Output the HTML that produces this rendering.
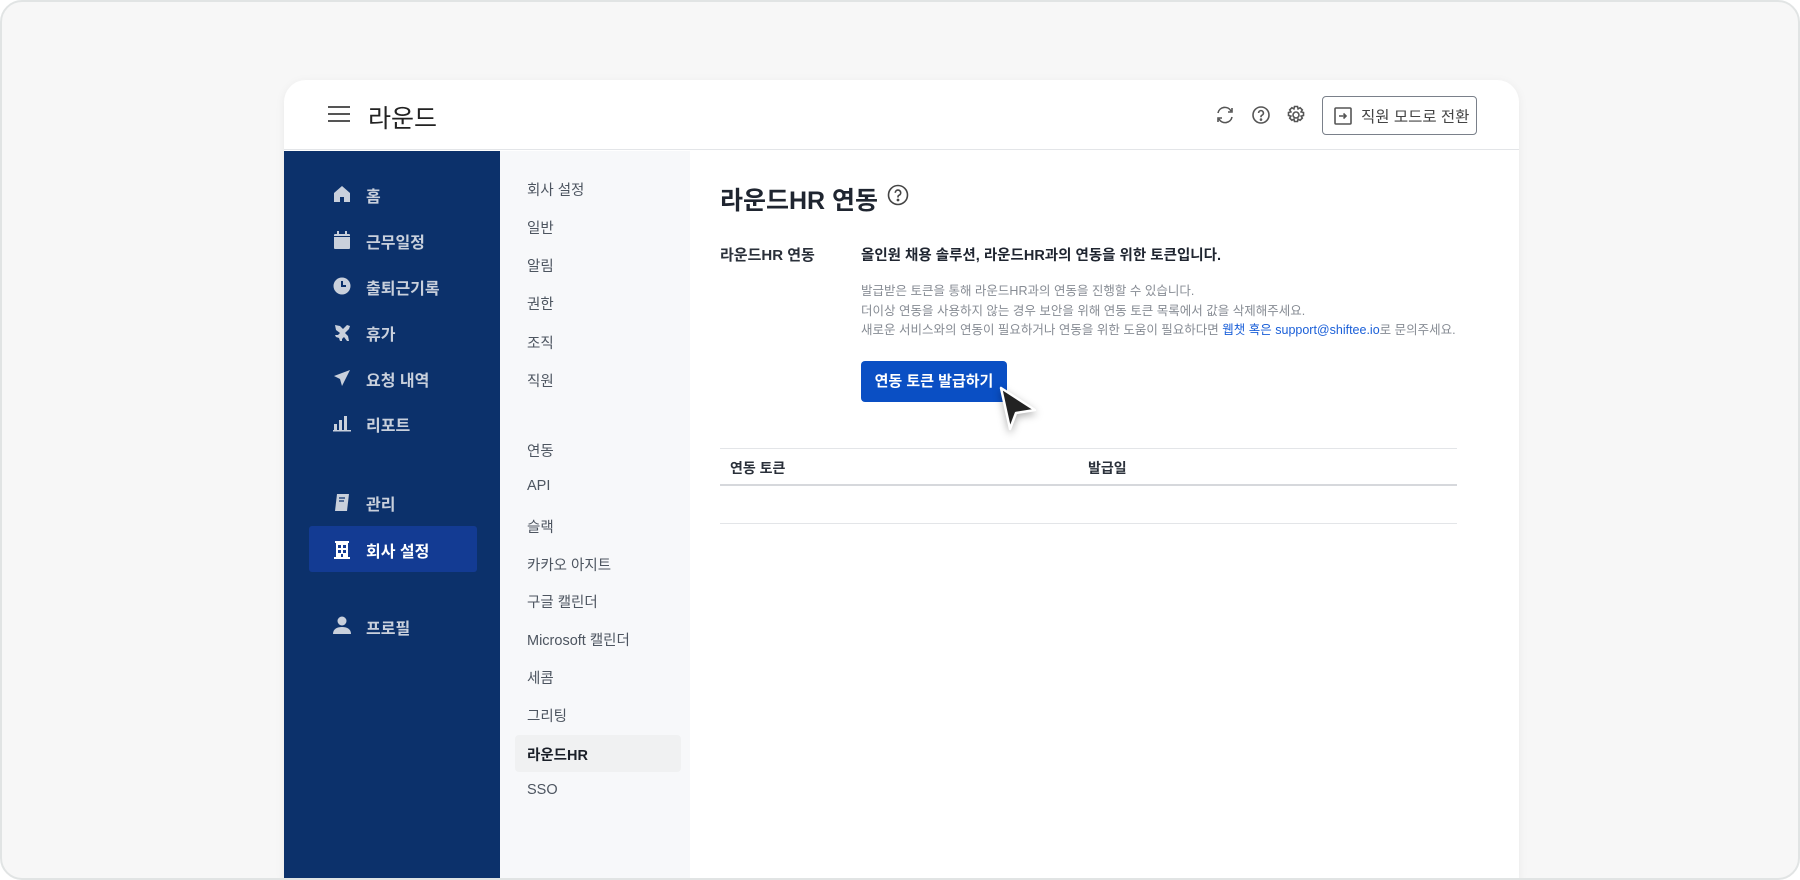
<!DOCTYPE html>
<html><head><meta charset="utf-8"><style>
*{box-sizing:border-box;margin:0;padding:0}
body{width:1800px;height:880px;background:#fff;font-family:"Liberation Sans","Noto Sans CJK KR",sans-serif;overflow:hidden;position:relative}
.frame{position:absolute;left:0;top:0;width:1800px;height:880px;border:2px solid #e1e4e4;border-radius:22px;background:#f7f7f7;overflow:hidden}
.card{position:absolute;left:282px;top:78px;width:1235px;height:802px;background:#fff;border-radius:22px 22px 0 0;overflow:hidden;box-shadow:0 2px 10px rgba(0,0,0,.06)}
.hdr{position:absolute;left:0;top:0;width:100%;height:70px;border-bottom:1px solid #e3e5e8}
.side{position:absolute;left:0;top:71px;width:216px;height:740px;background:#0c316b}
.sub{position:absolute;left:216px;top:71px;width:190px;height:740px;background:#f7f8fa}
.abs{position:absolute;white-space:nowrap}
.nav{color:#c9d0dc;font-size:16px;font-weight:bold;left:82px}
.ic{position:absolute;left:49px}
.sn{color:#4d5560;font-size:14.5px;left:243px}
</style></head><body>
<div class="frame">
<div class="card">
 <div class="hdr">
  <svg class="abs" style="left:44px;top:25px" width="22" height="18"><g stroke="#555" stroke-width="2"><line x1="0" y1="2" x2="22" y2="2"/><line x1="0" y1="9" x2="22" y2="9"/><line x1="0" y1="16" x2="22" y2="16"/></g></svg>
  <div class="abs" style="left:84px;top:19px;font-size:25px;color:#222">라운드</div>
  <svg class="abs" style="left:931px;top:25px" width="20" height="20" fill="none" stroke="#555" stroke-width="1.6"><path d="M3 8a7 7 0 0 1 13-2M17 3v4h-4M17 12a7 7 0 0 1-13 2M3 17v-4h4"/></svg>
  <svg class="abs" style="left:967px;top:25px" width="20" height="20" fill="none" stroke="#555" stroke-width="1.6"><circle cx="10" cy="10" r="8"/><path d="M7.6 8a2.4 2.4 0 1 1 3.4 2.2c-.7.3-1 .8-1 1.5v.6"/><circle cx="10" cy="14.6" r=".5" fill="#555"/></svg>
  <svg class="abs" style="left:1002px;top:25px" width="20" height="20" fill="none" stroke="#555" stroke-width="1.6"><circle cx="10" cy="10" r="3"/><path d="M8.5 1.5h3l.6 2.4 2-1.2 2.2 2.2-1.2 2 2.4.6v3l-2.4.6 1.2 2-2.2 2.2-2-1.2-.6 2.4h-3l-.6-2.4-2 1.2-2.2-2.2 1.2-2-2.4-.6v-3l2.4-.6-1.2-2 2.2-2.2 2 1.2z"/></svg>
  <div class="abs" style="left:1038px;top:16px;width:155px;height:39px;border:1.5px solid #7a808a;border-radius:4px"></div>
  <svg class="abs" style="left:1050px;top:27px" width="18" height="18" fill="none" stroke="#555" stroke-width="1.6"><rect x="1" y="1" width="16" height="16" rx="1"/><path d="M5 9h7M9.5 6.5 12 9l-2.5 2.5"/></svg>
  <div class="abs" style="left:1077px;top:25px;font-size:15.5px;color:#444">직원 모드로 전환</div>
 </div>
 <div class="side"></div>
 <div class="sub"></div>
 <div class="abs" style="left:25px;top:446px;width:168px;height:46px;background:#133b93;border-radius:3px"></div>
 <svg class="ic" style="top:105px" width="18" height="18" fill="#c9d0dc"><path d="M9 1 1 8v9h6v-5h4v5h6V8z"/></svg>
 <svg class="ic" style="top:151px" width="18" height="18" fill="#c9d0dc"><rect x="1" y="3" width="16" height="15" rx="1"/><rect x="4" y="0" width="2" height="4"/><rect x="12" y="0" width="2" height="4"/><rect x="1" y="5" width="16" height="1" fill="#0c316b"/></svg>
 <svg class="ic" style="top:197px" width="18" height="18"><circle cx="9" cy="9" r="8.5" fill="#c9d0dc"/><path d="M9 4v5h4" stroke="#0c316b" stroke-width="2" fill="none"/></svg>
 <svg class="ic" style="top:243px" width="18" height="18" fill="#c9d0dc"><path d="M2 2l5 1 3 3 4-4 3 1-1 3-4 4 3 3 1 5-2 0-3-4-2 2v3l-2-1-1-3-3-1-1-2h3l2-2-4-3z"/></svg>
 <svg class="ic" style="top:289px" width="18" height="18" fill="#c9d0dc"><path d="M17 1 1 7l6 3 2 7z"/></svg>
 <svg class="ic" style="top:334px" width="18" height="18" fill="#c9d0dc"><rect x="1" y="10" width="3" height="7"/><rect x="6" y="6" width="3" height="11"/><rect x="11" y="2" width="3" height="15"/><rect x="0" y="16" width="18" height="1.5"/></svg>
 <svg class="ic" style="top:413px" width="18" height="19" fill="#c9d0dc"><path d="M4 1h12l-2 17H2z"/><path d="M6 5h6M6 8h5" stroke="#0c316b" stroke-width="1.3"/></svg>
 <svg class="ic" style="top:460px" width="18" height="19" fill="#fff"><path d="M2 1h14v2h-1v14h2v2H1v-2h2V3H2z"/><g fill="#133b93"><rect x="5" y="5" width="3" height="3"/><rect x="10" y="5" width="3" height="3"/><rect x="5" y="10" width="3" height="3"/><rect x="10" y="10" width="3" height="3"/><rect x="8" y="14" width="2" height="3"/></g></svg>
 <svg class="ic" style="top:536px" width="18" height="18" fill="#c9d0dc"><circle cx="9" cy="5" r="4.5"/><path d="M0 18c0-5 4-7 9-7s9 2 9 7z"/></svg>
 <div class="abs nav" style="top:103px">홈</div>
 <div class="abs nav" style="top:149px">근무일정</div>
 <div class="abs nav" style="top:195px">출퇴근기록</div>
 <div class="abs nav" style="top:241px">휴가</div>
 <div class="abs nav" style="top:287px">요청 내역</div>
 <div class="abs nav" style="top:332px">리포트</div>
 <div class="abs nav" style="top:411px">관리</div>
 <div class="abs nav" style="top:458px;color:#fff">회사 설정</div>
 <div class="abs nav" style="top:535px">프로필</div>
 <div class="abs sn" style="top:99px">회사 설정</div>
 <div class="abs sn" style="top:137px">일반</div>
 <div class="abs sn" style="top:175px">알림</div>
 <div class="abs sn" style="top:213px">권한</div>
 <div class="abs sn" style="top:252px">조직</div>
 <div class="abs sn" style="top:290px">직원</div>
 <div class="abs sn" style="top:360px">연동</div>
 <div class="abs sn" style="top:398px">API</div>
 <div class="abs sn" style="top:436px">슬랙</div>
 <div class="abs sn" style="top:474px">카카오 아지트</div>
 <div class="abs sn" style="top:511px">구글 캘린더</div>
 <div class="abs sn" style="top:549px">Microsoft 캘린더</div>
 <div class="abs sn" style="top:587px">세콤</div>
 <div class="abs sn" style="top:625px">그리팅</div>
 <div class="abs" style="left:231px;top:655px;width:166px;height:37px;background:#f0f1f2;border-radius:4px"></div>
 <div class="abs sn" style="top:664px;color:#1a1f28;font-weight:bold">라운드HR</div>
 <div class="abs sn" style="top:702px">SSO</div>
 <div class="abs" style="left:436px;top:101px;font-size:25px;font-weight:bold;color:#1f2530">라운드HR 연동</div>
 <svg class="abs" style="left:603px;top:104px" width="22" height="22" fill="none" stroke="#444" stroke-width="1.6"><circle cx="11" cy="11" r="9.5"/><path d="M8.3 8.8a2.7 2.7 0 1 1 3.8 2.4c-.7.3-1.1.8-1.1 1.6v.7"/><circle cx="11" cy="16" r=".6" fill="#444"/></svg>
 <div class="abs" style="left:436px;top:164px;font-size:15px;font-weight:bold;color:#2a303a">라운드HR 연동</div>
 <div class="abs" style="left:577px;top:164px;font-size:14.5px;font-weight:bold;color:#1f2530">올인원 채용 솔루션, 라운드HR과의 연동을 위한 토큰입니다.</div>
 <div class="abs" style="left:577px;top:202px;font-size:12.5px;color:#878c94;line-height:19.5px">발급받은 토큰을 통해 라운드HR과의 연동을 진행할 수 있습니다.<br>더이상 연동을 사용하지 않는 경우 보안을 위해 연동 토큰 목록에서 값을 삭제해주세요.<br>새로운 서비스와의 연동이 필요하거나 연동을 위한 도움이 필요하다면 <span style="color:#1a5fd8">웹챗 혹은 support@shiftee.io</span>로 문의주세요.</div>
 <div class="abs" style="left:577px;top:281px;width:146px;height:41px;background:#0a4fc4;border-radius:4px;color:#fff;font-size:15px;font-weight:bold;text-align:center;line-height:41px">연동 토큰 발급하기</div>
 <svg class="abs" style="left:714px;top:305px;filter:drop-shadow(0 3px 4px rgba(0,0,0,.3))" width="44" height="50"><path d="M3 3 L12 44 L18 28 L37 25 Z" fill="#222" stroke="#fff" stroke-width="2.5" stroke-linejoin="round"/></svg>
 <div class="abs" style="left:436px;top:368px;width:737px;height:1px;background:#e3e5e8"></div>
 <div class="abs" style="left:446px;top:378px;font-size:14px;font-weight:bold;color:#2a303a">연동 토큰</div>
 <div class="abs" style="left:804px;top:378px;font-size:14px;font-weight:bold;color:#2a303a">발급일</div>
 <div class="abs" style="left:436px;top:404px;width:737px;height:2px;background:#d6d8dc"></div>
 <div class="abs" style="left:436px;top:443px;width:737px;height:1px;background:#e3e5e8"></div>
</div>
</div>
</body></html>
